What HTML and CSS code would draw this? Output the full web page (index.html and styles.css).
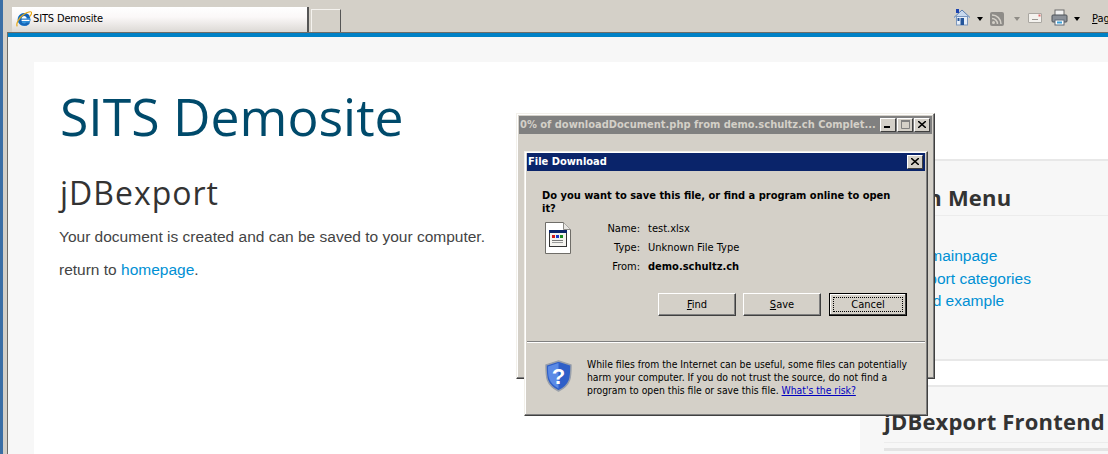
FILE: index.html
```html
<!DOCTYPE html>
<html lang="en">
<head>
<meta charset="utf-8">
<title>SITS Demosite</title>
<link rel="stylesheet" href="styles.css">
</head>
<body>
<div class="browser">
  <div class="topbar">
    <div class="tab">
      <svg class="tab-icon" width="16" height="16" viewBox="0 0 16 16"><circle cx="8" cy="8.500" r="6.500" fill="#3a9be0"/><path d="M5.500 7.200h8.500c0-3.200-2.200-5-5.500-5-3.800 0-6.500 2.700-6.500 6.400s2.700 6.200 6.500 6.200c2.700 0 4.800-1.200 5.500-3.400H10c-.5.900-1 1.200-1.800 1.200-1.500 0-2.500-1-2.500-2.300h8.500V8.300H5.500z" fill="#1565b8"/><path d="M5.600 7.400C5.800 6 6.900 5.100 8.200 5.100s2.300.9 2.500 2.300z" fill="#fff"/><rect x="5.600" y="8.700" width="8" height="1.300" fill="#fff"/><path d="M1.300 15.300C-.3 13.200 2.600 6.600 8 3.200c3.700-2.300 6.900-3 7.500-1.900.5.900-.7 2.900-1.900 4.400" fill="none" stroke="#e6a817" stroke-width="1.200"/></svg>
      <span>SITS Demosite</span>
    </div>
    <div class="new-tab"></div>
    <div class="tools">
      <svg class="tool-home" width="18" height="18" viewBox="0 0 18 18"><path d="M1 9.500 9 2l8 7.500" fill="#c7d8ee" stroke="#5b7fb0"/><rect x="3.500" y="8.500" width="11" height="8.500" fill="#e6eef8" stroke="#7d97bd"/><rect x="7.500" y="10" width="3.500" height="7" fill="#24559a"/><rect x="4.500" y="10" width="2" height="3" fill="#24559a"/><rect x="3" y="1" width="3" height="4" fill="#1c44b0"/></svg>
      <i class="caret"></i>
      <svg class="tool-feed" width="14" height="14" viewBox="0 0 14 14"><rect width="14" height="14" rx="2" fill="#8e8c88"/><circle cx="3.500" cy="10.500" r="1.500" fill="#d4d0c8"/><path d="M2 6.500a5.500 5.500 0 0 1 5.500 5.500M2 3a9 9 0 0 1 9 9" fill="none" stroke="#d4d0c8" stroke-width="1.500"/></svg>
      <i class="caret caret-off"></i>
      <svg class="tool-mail" width="14" height="10" viewBox="0 0 14 10"><rect width="14" height="10" fill="#f4f2ee"/><path d="M.5.500h13v9H.5z" fill="none" stroke="#aaa7a1"/><rect x="4" y="6" width="6" height="1" fill="#9a9792"/><rect x="10.500" y="1.500" width="2" height="2" fill="#e06a6a"/></svg>
      <svg class="tool-print" width="17" height="17" viewBox="0 0 17 17"><rect x="4" y="1" width="9" height="6" fill="#f2f2f2" stroke="#6a6a6a"/><rect x="1" y="6" width="15" height="7" rx="1" fill="#8a9098" stroke="#4d5258"/><rect x="4" y="11" width="9" height="5" fill="#fff" stroke="#5f6a78"/><rect x="6" y="12.500" width="5" height="2" fill="#3aa0d8"/></svg>
      <i class="caret caret-last"></i>
      <span class="tool-page"><u>P</u>age</span>
    </div>
  </div>
  <div class="viewport">
    <div class="sheet">
      <main class="main">
        <h1>SITS Demosite</h1>
        <h2>jDBexport</h2>
        <p>Your document is created and can be saved to your computer.</p>
        <p>return to <a href="#">homepage</a>.</p>
      </main>
      <aside class="side">
        <section class="panel panel-menu">
          <h3>Main Menu</h3>
          <ul>
            <li><a href="#">to mainpage</a></li>
            <li><a href="#">export categories</a></li>
            <li><a href="#">load example</a></li>
          </ul>
        </section>
        <section class="panel panel-front">
          <h3>jDBexport Frontend</h3>
        </section>
      </aside>
    </div>
  </div>
</div>

<div class="window progress">
  <div class="titlebar titlebar-off">
    <span class="title-text">0% of downloadDocument.php from demo.schultz.ch Complet...</span>
    <span class="capbtn"><svg width="8" height="7" viewBox="0 0 8 7"><rect x="0" y="5" width="6" height="2" fill="#000"/></svg></span>
    <span class="capbtn capbtn-dim"><svg width="9" height="9" viewBox="0 0 9 9"><path d="M.5.500h8v8h-8z" fill="none" stroke="#808080"/><rect x="0" y="0" width="9" height="2" fill="#808080"/></svg></span>
    <span class="capbtn capbtn-close"><svg width="8" height="7" viewBox="0 0 8 7"><path d="M0 0l8 7M8 0 0 7" stroke="#000" stroke-width="1.500"/></svg></span>
  </div>
</div>

<div class="window dialog">
  <div class="titlebar">
    <span class="title-text">File Download</span>
    <span class="capbtn capbtn-close"><svg width="8" height="7" viewBox="0 0 8 7"><path d="M0 0l8 7M8 0 0 7" stroke="#000" stroke-width="1.500"/></svg></span>
  </div>
  <div class="body">
    <p class="question">Do you want to save this file, or find a program online to open it?</p>
    <div class="file">
      <svg class="file-icon" width="26" height="32" viewBox="0 0 26 32"><path d="M.5.500h18l7 7v24H.5z" fill="#fff" stroke="#6f6d68"/><path d="M18.500.500v7h7" fill="#e8e6e2" stroke="#8d8b86"/><rect x="4.500" y="8.500" width="17" height="16" fill="#f4f3ef" stroke="#333"/><rect x="4" y="8" width="18" height="3" fill="#0a246a"/><rect x="7" y="13" width="3" height="3" fill="#d01818"/><rect x="11" y="13" width="3" height="3" fill="#1a38c8"/><rect x="15" y="13" width="3" height="3" fill="#1a8a20"/><rect x="7" y="18" width="11" height="1" fill="#777"/><rect x="7" y="20" width="11" height="1" fill="#999"/></svg>
      <dl class="meta">
        <dt>Name:</dt><dd>test.xlsx</dd>
        <dt>Type:</dt><dd>Unknown File Type</dd>
        <dt>From:</dt><dd class="strong">demo.schultz.ch</dd>
      </dl>
    </div>
    <div class="actions">
      <button class="btn" type="button"><u>F</u>ind</button>
      <button class="btn" type="button"><u>S</u>ave</button>
      <button class="btn btn-default" type="button"><span>Cancel</span></button>
    </div>
    <div class="notice">
      <svg class="shield" width="27" height="32" viewBox="0 0 27 32"><path d="M13.500 1 26 5c0 12 0 20-12.500 26C1 25 1 17 1 5z" fill="#2f5fc8" stroke="#9aa0aa" stroke-width="1.500"/><path d="M13.500 3 3 6.500c0 10 0 16 10.500 22z" fill="#5a8ae6"/><text x="13.500" y="24" class="shield-mark">?</text></svg>
      <p>While files from the Internet can be useful, some files can potentially harm your computer. If you do not trust the source, do not find a program to open this file or save this file. <a href="#">What's the risk?</a></p>
    </div>
  </div>
</div>
</body>
</html>
```

FILE: styles.css
```css
* { box-sizing: border-box; }
html, body { margin: 0; height: 100%; overflow: hidden; }
body { background: #d4d0c8; font-family: "Liberation Sans", sans-serif; width: 1108px; height: 454px; position: relative; }

.browser { height: 454px; border-left: 3px solid #3a6ea5; display: flex; flex-direction: column; overflow: hidden; }

.topbar { height: 32px; flex: none; display: flex; align-items: flex-end; padding-left: 9px; background: #d4d0c8; }
.tab { width: 297px; height: 25px; flex: none; display: flex; align-items: center; gap: 1px; padding: 0 0 2px 4px; font: 11px "DejaVu Sans Condensed", "DejaVu Sans", sans-serif; letter-spacing: -.15px; color: #000; background: linear-gradient(#ffffff, #fbf8f8 40%, #dcd9d5); border-right: 2px solid #555; }
.tab-icon { flex: none; }
.new-tab { width: 30px; height: 23px; flex: none; margin-left: 2px; border: 1px solid #f4f2ee; border-right-color: #555; border-bottom: 0; }
.tools { display: flex; align-items: center; height: 32px; padding-left: 612px; white-space: nowrap; flex: none; }
.tool-home { margin-right: 6px; margin-top: 1px; }
.caret { width: 0; height: 0; border: 3px solid transparent; border-top: 4px solid #000; border-bottom: 0; margin: 5px 7px 0 0; }
.caret-off { border-top-color: #8f8c86; margin: 5px 8px 0 10px; }
.caret-last { margin-right: 12px; }
.tool-feed { margin-top: 6px; }
.tool-mail { margin-top: 4px; margin-right: 9px; }
.tool-print { margin-top: 3px; margin-right: 6px; }
.tool-page { font: 11px "DejaVu Sans Condensed", "DejaVu Sans", sans-serif; color: #000; margin-top: 4px; }

.viewport { flex: 1; min-height: 0; margin-left: 4px; border-left: 1px solid #6f6d68; border-top: 1px solid #6f6d68; background: #f7f7f7; padding: 25px 0 0 26px; position: relative; }
.viewport::before { content: ""; display: block; height: 4px; background: #0081c6; margin: -25px 0 25px -26px; }
.sheet { background: #fff; display: flex; width: 1074px; height: 400px; }
.main { width: 826px; flex: none; padding: 24px 0 0 26px; }
.main h1 { margin: 0; font: 400 51.700px/60px "Open Sans", sans-serif; color: #004a6b; }
.main h2 { margin: 27px 0 12px; font: 400 32px/40px "Open Sans", sans-serif; letter-spacing: 1px; color: #333; }
.main p { margin: 0 0 9.500px -1px; font-size: 15.500px; line-height: 23px; color: #444; }
a { color: #0090d4; text-decoration: none; }

.side { width: 248px; flex: none; padding-top: 97px; }
.panel { background: #f7f7f7; border-top: 2px solid #e8e8e8; padding: 0 0 0 24px; }
.panel h3 { margin: 0; font: 700 22px/30px "Open Sans", sans-serif; color: #333; letter-spacing: .2px; white-space: nowrap; }
.panel-menu { height: 202px; border-bottom: 2px solid #e8e8e8; padding-top: 21px; margin-bottom: 24px; }
.panel-menu h3 { padding: 0 0 3px 2px; border-bottom: 1px solid #ececec; }
.panel ul { list-style: none; margin: 29px 0 0; padding: 0 0 0 28px; font-size: 15.500px; line-height: 22.500px; }
.panel-front { height: 80px; padding-top: 19px; }
.panel-front h3 { padding-bottom: 6px; border-bottom: 1px solid #ececec; }
.panel-front::after { content: ""; display: block; height: 3px; margin-top: 5px; background: #e4e4e4; }

.window { position: absolute; background: #d4d0c8; border: 1px solid; border-color: #f2f0ea #404040 #404040 #f2f0ea; box-shadow: inset -1px -1px 0 #808080, inset 1px 1px 0 #fff; padding: 2px; font-family: "DejaVu Sans Condensed", "DejaVu Sans", sans-serif; font-size: 11px; color: #000; }
.progress { left: 516px; top: 113px; width: 419px; height: 266px; }
.dialog { left: 524px; top: 151px; width: 404px; height: 265px; padding-top: 1px; }
.titlebar { height: 18px; display: flex; align-items: center; gap: 1px; padding: 0 2px 1px 1px; background: #0a246a; color: #fff; font-weight: 700; }
.titlebar-off { background: #808080; color: #d4d0c8; }
.title-text { flex: 1; white-space: nowrap; overflow: hidden; }
.capbtn { width: 16px; height: 14px; background: #d4d0c8; display: flex; align-items: center; justify-content: center; border: 1px solid; border-color: #fff #404040 #404040 #fff; }
.body { display: flex; flex-direction: column; height: 242px; }
.question { margin: 0; padding: 18px 20px 0 15px; font-weight: 700; line-height: 13px; }
.file { display: flex; height: 55px; padding: 4px 0 0 18px; }
.file-icon { flex: none; margin-top: 3px; }
.meta { display: grid; grid-template-columns: 69px auto; grid-auto-rows: 19px; column-gap: 8px; margin: 0; align-content: start; line-height: 19px; }
.meta dt { text-align: right; }
.meta dd { margin: 0; }
.meta .strong { font-weight: 700; }
.actions { display: flex; flex: none; justify-content: flex-end; gap: 7px; padding: 23px 18px 0 0; height: 71px; }
.btn { width: 78px; height: 23px; padding: 0; background: #d4d0c8; color: #000; font: 11px "DejaVu Sans Condensed", "DejaVu Sans", sans-serif; border: 1px solid; border-color: #fff #404040 #404040 #fff; box-shadow: inset -1px -1px 0 #808080; border-radius: 0; }
.btn-default { margin-left: 1px; border: 1px solid #000; box-shadow: inset -1px -1px 0 #404040, inset 1px 1px 0 #fff; padding: 3px; }
.btn-default span { display: block; height: 100%; line-height: 13px; border: 1px dotted #000; }
.notice { flex: 1; display: flex; gap: 15px; padding: 16px 16px 0 18px; border-top: 1px solid #808080; box-shadow: inset 0 1px 0 #fff; }
.shield { flex: none; margin-top: 2px; }
.shield-mark { font: 700 22px "Liberation Sans", sans-serif; fill: #fff; text-anchor: middle; }
.notice p { margin: 0; line-height: 13px; font-size: 10.300px; }
.notice a { color: #0000c0; text-decoration: underline; }
```
